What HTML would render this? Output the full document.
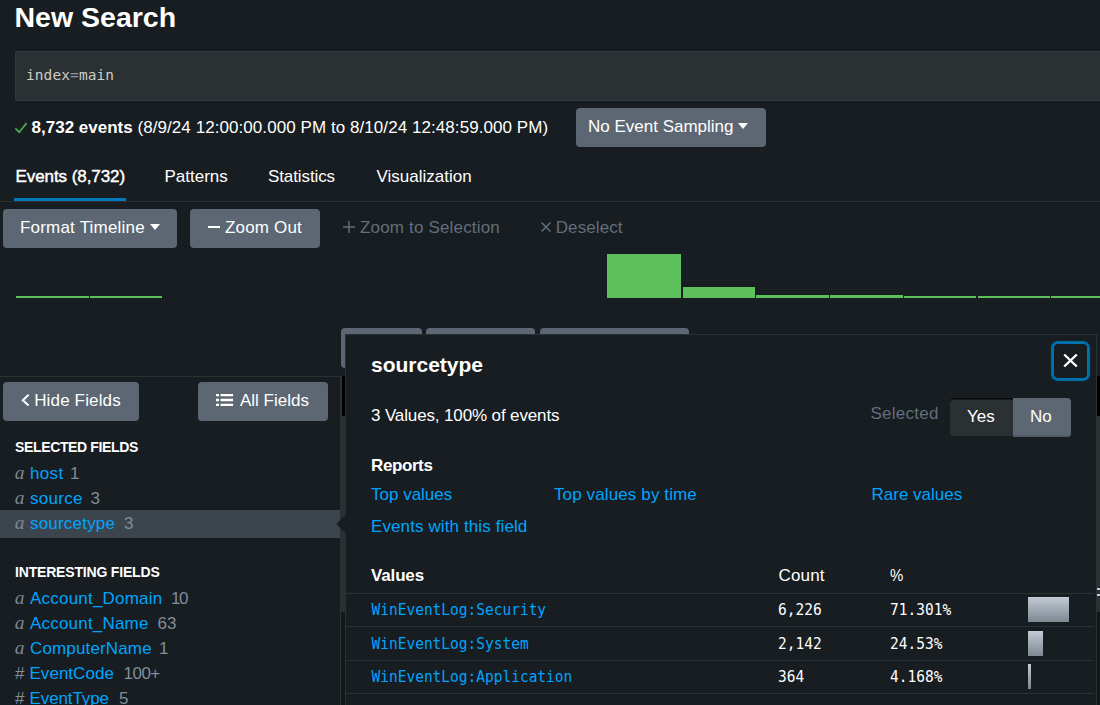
<!DOCTYPE html>
<html lang="en">
<head>
<meta charset="utf-8">
<title>New Search</title>
<style>
*{box-sizing:border-box;margin:0;padding:0}
html,body{width:1100px;height:705px;overflow:hidden;background:#171d21}
body{font-family:"Liberation Sans",sans-serif;color:#fff;position:relative;font-size:17px}
.abs{position:absolute;white-space:nowrap;line-height:1}
.t{position:absolute;white-space:nowrap;line-height:20px;height:20px;transform-origin:0 50%}
.mono{font-family:"DejaVu Sans Mono","Liberation Mono",monospace}
.btn{position:absolute;background:#5c6773;border-radius:4px;height:39px}
.link{color:#00a4fd}
.tv{transform:scaleY(1.06);transform-origin:0 75%}
.muted{color:#818d99}
.dim{color:#626e7b}
h1{position:absolute;left:14.5px;top:-0.25px;font-size:28.5px;line-height:34px;font-weight:bold;white-space:nowrap;transform-origin:0 50%}
#searchbox{position:absolute;left:15px;top:51px;width:1100px;height:50px;background:#2b3033;border:1px solid #2b3b4a;border-radius:3px}
#tabline{position:absolute;left:0;top:201px;width:1100px;height:1px;background:#2b3033}
#tabactive{position:absolute;left:14px;top:198px;width:112px;height:3px;background:#007abd}
.bar{position:absolute;background:#5cc05c}
#popup{position:absolute;left:345px;top:334px;width:752px;height:400px;background:#171d21;border:1px solid #2b3033}
.row{position:absolute;left:0;width:750px;height:1px;background:#2b3033}
.sel{position:absolute;left:0;top:510px;width:340px;height:28px;background:#3c444d}
.vb{background:linear-gradient(#c3cbd4,#7d8893)}
.ic{font-family:"Liberation Serif",serif;font-style:italic;color:#7c8793;font-size:19.5px;margin-top:-0.8px;margin-left:-0.3px}
</style>
</head>
<body>
<h1 id="title">New Search</h1>
<div id="searchbox"></div>
<div class="t mono" id="q" style="left:26px;top:65px;font-size:14.5px;letter-spacing:0.08px;color:#cdcdc8">index<span style="color:#8f98a1">=</span>main</div>

<svg class="abs" style="left:15px;top:121px" width="12" height="13" viewBox="0 0 12 13"><path d="M0.3 7.4 L4.2 11.2 L11.6 2.1" fill="none" stroke="#4aac52" stroke-width="1.8"/></svg>
<div class="t" id="evcount" style="left:31.6px;top:118px;font-weight:bold">8,732 events</div>
<div class="t" id="evrange" style="left:137.5px;top:118px;letter-spacing:0.065px">(8/9/24 12:00:00.000 PM to 8/10/24 12:48:59.000 PM)</div>

<div class="btn" style="left:576px;top:108px;width:190px"></div>
<div class="t" id="nes" style="left:588px;top:117px">No Event Sampling</div>
<svg class="abs" style="left:738px;top:123px" width="10" height="6"><path d="M0 0H10L5 6Z" fill="#fff"/></svg>

<div class="t" id="tab1" style="left:15.5px;top:167px;-webkit-text-stroke:0.45px #fff;letter-spacing:-0.07px">Events (8,732)</div>
<div class="t" id="tab2" style="left:164.5px;top:167px">Patterns</div>
<div class="t" id="tab3" style="left:268px;top:167px;letter-spacing:-0.1px">Statistics</div>
<div class="t" id="tab4" style="left:376.5px;top:167px">Visualization</div>
<div id="tabline"></div>
<div id="tabactive"></div>

<div class="btn" style="left:3px;top:209px;width:174px"></div>
<div class="t" id="ft" style="left:20px;top:218px;letter-spacing:0.2px">Format Timeline</div>
<svg class="abs" style="left:150px;top:224px" width="10" height="6"><path d="M0 0H10L5 6Z" fill="#fff"/></svg>
<div class="btn" style="left:190px;top:209px;width:130px"></div>
<div class="abs" style="left:208px;top:226px;width:12px;height:2px;background:#fff"></div>
<div class="t" id="zo" style="left:225px;top:218px;letter-spacing:0.18px">Zoom Out</div>
<svg class="abs" style="left:343px;top:221px" width="12" height="12"><path d="M6 0V12M0 6H12" stroke="#626e7b" stroke-width="1.5" fill="none"/></svg>
<div class="t dim" id="zs" style="left:360px;top:218px;letter-spacing:0.17px">Zoom to Selection</div>
<svg class="abs" style="left:541px;top:222px" width="10" height="10"><path d="M0.5 0.5L9.5 9.5M9.5 0.5L0.5 9.5" stroke="#626e7b" stroke-width="1.5" fill="none"/></svg>
<div class="t dim" id="ds" style="left:555.7px;top:218px;letter-spacing:0.11px">Deselect</div>

<!-- timeline bars -->
<div class="abs" style="left:16px;top:254px;width:1084px;height:1px;background:#1a2024"></div>
<div class="abs" style="left:16px;top:263px;width:1084px;height:1px;background:#1a2024"></div>
<div class="abs" style="left:16px;top:271.5px;width:1084px;height:1px;background:#1a2024"></div>
<div class="abs" style="left:16px;top:280px;width:1084px;height:1px;background:#1a2024"></div>
<div class="abs" style="left:16px;top:289px;width:1084px;height:1px;background:#1a2024"></div>
<div class="bar" style="left:16.3px;top:296.3px;width:72.5px;height:1.9px"></div>
<div class="bar" style="left:90.1px;top:296.3px;width:72.4px;height:1.9px"></div>
<div class="bar" style="left:607.4px;top:253.7px;width:74.1px;height:44.5px"></div>
<div class="bar" style="left:682.7px;top:286.6px;width:72.3px;height:11.6px"></div>
<div class="bar" style="left:756.2px;top:294.9px;width:72.6px;height:3.3px"></div>
<div class="bar" style="left:830.1px;top:294.8px;width:72.6px;height:3.4px"></div>
<div class="bar" style="left:904px;top:296.2px;width:72.2px;height:2.0px"></div>
<div class="bar" style="left:977.7px;top:296.2px;width:72.2px;height:2.0px"></div>
<div class="bar" style="left:1051.4px;top:296.2px;width:72.6px;height:2.0px"></div>
<!-- hidden buttons behind popup -->
<div class="btn" style="left:341px;top:328px;width:81px;height:40px"></div>
<div class="btn" style="left:426px;top:328px;width:109px;height:40px"></div>
<div class="btn" style="left:540px;top:328px;width:149px;height:40px"></div>

<!-- sidebar -->
<div class="abs" style="left:0;top:376px;width:341px;height:1px;background:#2b3033"></div>
<div class="abs" style="left:340px;top:376px;width:2px;height:340px;background:#2b3033"></div>
<div class="abs" style="left:342px;top:376px;width:3px;height:40px;background:#000"></div>
<div class="abs" style="left:341px;top:416px;width:4px;height:196px;background:#2b3033"></div>
<div class="abs" style="left:341px;top:612px;width:4px;height:100px;background:#12171a"></div>
<div class="abs" style="left:1097px;top:376px;width:3px;height:40px;background:#000"></div>
<div class="abs" style="left:1097px;top:416px;width:3px;height:196px;background:#2b3033"></div>
<div class="abs" style="left:1097px;top:612px;width:3px;height:100px;background:#12171a"></div>
<div class="abs" style="left:1097px;top:588px;width:3px;height:2px;background:#c3cbd4"></div>
<div class="abs" style="left:1097px;top:594px;width:3px;height:2px;background:#c3cbd4"></div>

<div class="btn" style="left:3px;top:382px;width:136px"></div>
<svg class="abs" style="left:21px;top:393px" width="9" height="14"><path d="M7.6 1.8L1.8 7.2L7.6 12.6" stroke="#fff" stroke-width="2" fill="none"/></svg>
<div class="t" id="hf" style="left:34.2px;top:391px;letter-spacing:0.15px">Hide Fields</div>
<div class="btn" style="left:198px;top:382px;width:130px"></div>
<svg class="abs" style="left:216px;top:394px" width="18" height="12"><path d="M0 0h3v2.3h-3zM4.5 0h12.6v2.3h-12.6zM0 4.85h3v2.3h-3zM4.5 4.85h12.6v2.3h-12.6zM0 9.7h3v2.3h-3zM4.5 9.7h12.6v2.3h-12.6z" fill="#fff"/></svg>
<div class="t" id="af" style="left:240px;top:391px">All Fields</div>

<div class="t" id="sf" style="left:15px;top:437px;font-size:14px;font-weight:bold;letter-spacing:-0.36px">SELECTED FIELDS</div>
<div class="sel"></div>
<div class="t ic" style="left:15px;top:464px">a</div><div class="t link" id="f1" style="left:30px;top:464px;letter-spacing:0.33px">host</div><div class="t muted" style="left:70px;top:464px">1</div>
<div class="t ic" style="left:15px;top:489px">a</div><div class="t link" id="f2" style="left:30px;top:489px;letter-spacing:0.3px">source</div><div class="t muted" style="left:90.5px;top:489px">3</div>
<div class="t ic" style="left:15px;top:514px">a</div><div class="t link" id="f3" style="left:30px;top:514px;letter-spacing:0.2px">sourcetype</div><div class="t muted" style="left:124px;top:514px">3</div>

<div class="t" id="if" style="left:15px;top:562px;font-size:14px;font-weight:bold;letter-spacing:-0.18px">INTERESTING FIELDS</div>
<div class="t ic" style="left:15px;top:589px">a</div><div class="t link" id="f4" style="left:30px;top:589px;letter-spacing:0.21px">Account_Domain</div><div class="t muted" style="left:171px;top:589px;letter-spacing:-1.5px">10</div>
<div class="t ic" style="left:15px;top:614px">a</div><div class="t link" id="f5" style="left:30px;top:614px;letter-spacing:0.2px">Account_Name</div><div class="t muted" style="left:157.5px;top:614px">63</div>
<div class="t ic" style="left:15px;top:639px">a</div><div class="t link" id="f6" style="left:30px;top:639px;letter-spacing:0.15px">ComputerName</div><div class="t muted" style="left:159px;top:639px">1</div>
<div class="t muted" style="left:15px;top:664px">#</div><div class="t link" id="f7" style="left:29.5px;top:664px;letter-spacing:0.03px">EventCode</div><div class="t muted" style="left:123.5px;top:664px;letter-spacing:-0.5px">100+</div>
<div class="t muted" style="left:15px;top:689px">#</div><div class="t link" id="f8" style="left:29.5px;top:689px;letter-spacing:-0.1px">EventType</div><div class="t muted" style="left:119px;top:689px">5</div>

<!-- popup -->
<div id="popup"></div>
<svg class="abs" style="left:336px;top:514px" width="10" height="20"><path d="M10 0.5L0.3 10L10 19.5Z" fill="#171d21"/></svg>
<div class="t" id="ptitle" style="left:371px;top:353px;font-size:21px;line-height:24px;height:24px;font-weight:bold">sourcetype</div>
<div class="abs" style="left:1054px;top:344px;width:33px;height:34px;border-radius:4px;box-shadow:0 0 1px 3px #0072b0"></div>
<svg class="abs" style="left:1063px;top:353px" width="15" height="15"><path d="M1.2 1.5L13.8 13.5M13.8 1.5L1.2 13.5" stroke="#fff" stroke-width="2.4" fill="none"/></svg>
<div class="t" id="pvals" style="left:371px;top:406px;letter-spacing:-0.13px">3 Values, 100% of events</div>
<div class="t dim" id="psel" style="left:870.5px;top:404px;letter-spacing:0.25px">Selected</div>
<div class="abs" style="left:950px;top:398px;width:63px;height:38px;background:#2b3033;border-radius:4px 0 0 4px;box-shadow:inset 0 1.5px 0 #07090a"></div>
<div class="abs" style="left:1013px;top:398px;width:58px;height:39px;background:#5c6773;border-radius:0 4px 4px 0;box-shadow:inset 0 -2px 0 #525c68"></div>
<div class="t" id="pyes" style="left:967px;top:407px">Yes</div>
<div class="t" id="pno" style="left:1030px;top:407px">No</div>
<div class="t" id="prep" style="left:371px;top:456px;font-weight:bold;letter-spacing:-0.4px">Reports</div>
<div class="t link" id="ptv" style="left:371px;top:485px">Top values</div>
<div class="t link" id="ptvt" style="left:554px;top:485px;letter-spacing:0.12px">Top values by time</div>
<div class="t link" id="prv" style="left:871.5px;top:485px">Rare values</div>
<div class="t link" id="pev" style="left:371px;top:517px;letter-spacing:0.11px">Events with this field</div>
<div class="t" id="pval" style="left:371px;top:566px;font-weight:bold;letter-spacing:-0.15px">Values</div>
<div class="t" id="pcount" style="left:778.5px;top:566px;letter-spacing:0.15px">Count</div>
<div class="t" id="ppct" style="left:890px;top:566px;transform:scaleX(0.88)">%</div>
<div class="row" style="left:346px;top:593px;width:748px"></div>
<div class="row" style="left:346px;top:626px;width:748px"></div>
<div class="row" style="left:346px;top:660px;width:748px"></div>
<div class="row" style="left:346px;top:693px;width:748px"></div>
<div class="t mono link tv" id="v1" style="left:371.5px;top:600px;font-size:14.5px">WinEventLog:Security</div>
<div class="t mono link tv" id="v2" style="left:371.5px;top:634px;font-size:14.5px">WinEventLog:System</div>
<div class="t mono link tv" id="v3" style="left:371.5px;top:667px;font-size:14.5px">WinEventLog:Application</div>
<div class="t mono tv" id="c1" style="left:778px;top:600px;font-size:14.5px">6,226</div>
<div class="t mono tv" id="c2" style="left:778px;top:634px;font-size:14.5px">2,142</div>
<div class="t mono tv" id="c3" style="left:778px;top:667px;font-size:14.5px">364</div>
<div class="t mono tv" id="p1" style="left:890px;top:600px;font-size:14.5px">71.301%</div>
<div class="t mono tv" id="p2" style="left:890px;top:634px;font-size:14.5px">24.53%</div>
<div class="t mono tv" id="p3" style="left:890px;top:667px;font-size:14.5px">4.168%</div>
<div class="abs vb" style="left:1028px;top:597px;width:41px;height:25px"></div>
<div class="abs vb" style="left:1028px;top:631px;width:15px;height:25px"></div>
<div class="abs vb" style="left:1028px;top:664px;width:3px;height:25px"></div>
</body>
</html>
